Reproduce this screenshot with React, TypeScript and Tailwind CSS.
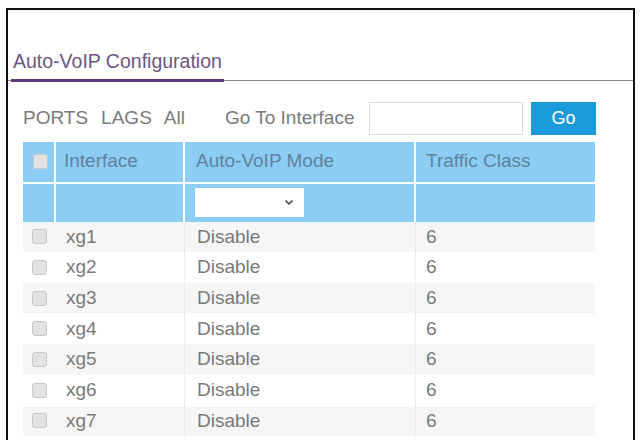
const rows = ["xg1", "xg2", "xg3", "xg4", "xg5", "xg6", "xg7"];

function Box() {
  return (
    <span className="block w-[15px] h-[15px] rounded-[3px] border border-[#c8c8c8] bg-[#e2e2e2]" />
  );
}

export default function App() {
  return (
    <div className="w-[640px] h-[440px] bg-white overflow-hidden pt-[8px] pl-[6px] pr-[5px] font-['Liberation_Sans',Arial,sans-serif] text-[#7a7a7a]">
      <div className="h-[440px] border-[2px] border-[#111] border-b-0 flex flex-col">
        <div className="pt-[42px] flex items-end border-b border-[#8a8a8a]">
          <div className="ml-[3px] px-[2px] pb-[7px] border-b-[3px] border-[#5d3a78] -mb-[2px] text-[19.5px] text-[#6e5682] leading-none">
            Auto-VoIP Configuration
          </div>
        </div>
        <div className="pl-[15px] w-[588px]">
          <div className="flex items-center h-[33px] mt-[21px] text-[19px]">
            <span>PORTS</span>
            <span className="ml-[13px]">LAGS</span>
            <span className="ml-[12px]">All</span>
            <span className="ml-[40px]">Go To Interface</span>
            <input className="ml-auto w-[154px] h-[33px] border border-[#dcdcdc] outline-none" />
            <button className="ml-[8px] w-[65px] h-[33px] bg-[#1b9ad9] text-white text-[18px]">Go</button>
          </div>
          <div className="mt-[7px] grid grid-cols-[33px_129px_231px_179px] text-[19px]">
            <div className="h-[40px] bg-[#8ccdf4] flex items-center justify-center pl-[3px] border-r-2 border-white">
              <Box />
            </div>
            <div className="h-[40px] bg-[#8ccdf4] flex items-center pl-[8px] border-r-2 border-white text-[#5f819c]">Interface</div>
            <div className="h-[40px] bg-[#8ccdf4] flex items-center pl-[11px] border-r-2 border-white text-[#5f819c]">Auto-VoIP Mode</div>
            <div className="h-[40px] bg-[#8ccdf4] flex items-center pl-[10px] text-[#5f819c]">Traffic Class</div>
            <div className="col-span-4 h-[2px] bg-white" />
            <div className="h-[38px] bg-[#8ccdf4] border-r-2 border-white" />
            <div className="h-[38px] bg-[#8ccdf4] border-r-2 border-white" />
            <div className="h-[38px] bg-[#8ccdf4] border-r-2 border-white flex items-center pl-[10px]">
              <div className="w-[109px] h-[29px] bg-white flex items-center justify-end pr-[10px]">
                <svg width="10" height="7" viewBox="0 0 10 7">
                  <path d="M1.5 1.5 L5 5 L8.5 1.5" fill="none" stroke="#666" strokeWidth="1.8" />
                </svg>
              </div>
            </div>
            <div className="h-[38px] bg-[#8ccdf4]" />
            {rows.map((r, i) => {
              const bg = i % 2 === 0 ? "bg-[#f6f6f6]" : "bg-white";
              return (
                <div key={r} className="contents">
                  <div className={`h-[30.7px] ${bg} flex items-center justify-center`}>
                    <Box />
                  </div>
                  <div className={`h-[30.7px] ${bg} flex items-center pl-[10px] border-r border-[#ececec]`}>{r}</div>
                  <div className={`h-[30.7px] ${bg} flex items-center pl-[12px] border-r border-[#ececec]`}>Disable</div>
                  <div className={`h-[30.7px] ${bg} flex items-center pl-[10px]`}>6</div>
                </div>
              );
            })}
          </div>
        </div>
      </div>
    </div>
  );
}
